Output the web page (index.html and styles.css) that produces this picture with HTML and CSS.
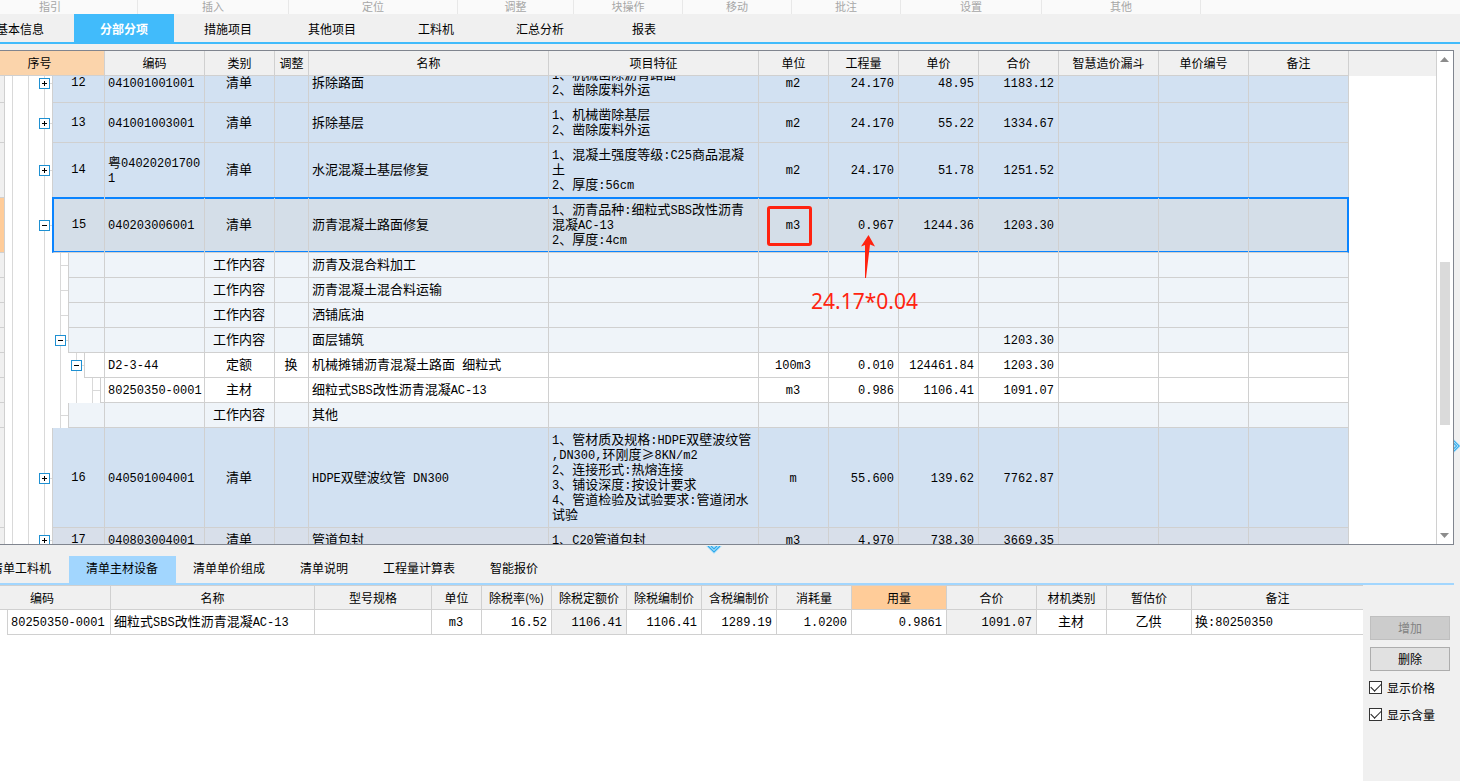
FILE: index.html
```html
<!DOCTYPE html>
<html lang="zh-CN">
<head>
<meta charset="utf-8">
<title>分部分项</title>
<link rel="stylesheet" href="styles.css">
</head>
<body>
<div class="ribbon">
  <span class="grp g1">指引</span><span class="grp g2">插入</span><span class="grp g3">定位</span><span class="grp g4">调整</span><span class="grp g5">块操作</span><span class="grp g5">移动</span><span class="grp g5">批注</span><span class="grp g6">设置</span><span class="grp g7">其他</span>
</div>
<nav class="tabs">
  <button>基本信息</button><button class="on">分部分项</button><button>措施项目</button><button>其他项目</button><button>工料机</button><button>汇总分析</button><button>报表</button>
</nav>

<main class="main">
  <section class="sheet">
    <div class="pane">
      <table class="grid head">
        <colgroup><col class="c105"><col class="c100"><col class="c70"><col class="c34"><col class="c240"><col class="c210"><col class="c70"><col class="c70"><col class="c80"><col class="c80"><col class="c100"><col class="c90"><col class="c100"><col></colgroup>
        <thead><tr><th class="seq">序号</th><th>编码</th><th>类别</th><th>调整</th><th>名称</th><th>项目特征</th><th>单位</th><th>工程量</th><th>单价</th><th>合价</th><th>智慧造价漏斗</th><th>单价编号</th><th>备注</th><th class="rest"></th></tr></thead>
      </table>
      <div class="view">
        <table class="grid rows">
          <colgroup><col class="c105"><col class="c100"><col class="c70"><col class="c34"><col class="c240"><col class="c210"><col class="c70"><col class="c70"><col class="c80"><col class="c80"><col class="c100"><col class="c90"><col class="c100"><col></colgroup>
          <tbody>
            <tr class="item"><td class="tree"><div class="node"><i class="strip"></i><i class="g"></i><i class="g"></i><span class="g t"><button class="tog" aria-label="展开"></button></span><b><span class="m">12</span></b></div></td><td><span class="m">041001001001</span></td><td class="c">清单</td><td></td><td>拆除路面</td><td><span class="m">1</span>、机械凿除沥青路面<br><span class="m">2</span>、凿除废料外运</td><td class="c"><span class="m">m2</span></td><td class="r"><span class="m">24.170</span></td><td class="r"><span class="m">48.95</span></td><td class="r"><span class="m">1183.12</span></td><td></td><td></td><td></td><td class="rest"></td></tr>
            <tr class="item"><td class="tree"><div class="node"><i class="strip"></i><i class="g"></i><i class="g"></i><span class="g t"><button class="tog" aria-label="展开"></button></span><b><span class="m">13</span></b></div></td><td><span class="m">041001003001</span></td><td class="c">清单</td><td></td><td>拆除基层</td><td><span class="m">1</span>、机械凿除基层<br><span class="m">2</span>、凿除废料外运</td><td class="c"><span class="m">m2</span></td><td class="r"><span class="m">24.170</span></td><td class="r"><span class="m">55.22</span></td><td class="r"><span class="m">1334.67</span></td><td></td><td></td><td></td><td class="rest"></td></tr>
            <tr class="item"><td class="tree"><div class="node"><i class="strip"></i><i class="g"></i><i class="g"></i><span class="g t"><button class="tog" aria-label="展开"></button></span><b><span class="m">14</span></b></div></td><td>粤<span class="m">04020201700</span><br><span class="m">1</span></td><td class="c">清单</td><td></td><td>水泥混凝土基层修复</td><td><span class="m">1</span>、混凝土强度等级<span class="m">:C25</span>商品混凝<br>土<br><span class="m">2</span>、厚度<span class="m">:56cm</span></td><td class="c"><span class="m">m2</span></td><td class="r"><span class="m">24.170</span></td><td class="r"><span class="m">51.78</span></td><td class="r"><span class="m">1251.52</span></td><td></td><td></td><td></td><td class="rest"></td></tr>
            <tr class="item sel"><td class="tree"><div class="node"><i class="strip"></i><i class="g"></i><i class="g"></i><span class="g t"><button class="tog open" aria-label="折叠"></button></span><b><span class="m">15</span></b></div></td><td><span class="m">040203006001</span></td><td class="c">清单</td><td></td><td>沥青混凝土路面修复</td><td><span class="m">1</span>、沥青品种<span class="m">:</span>细粒式<span class="m">SBS</span>改性沥青<br>混凝<span class="m">AC-13</span><br><span class="m">2</span>、厚度<span class="m">:4cm</span></td><td class="c note-cell"><span class="m">m3</span><span class="mark"></span></td><td class="r note-cell"><span class="m">0.967</span><svg class="arrow" width="16" height="43" viewBox="0 0 16 43"><path d="M8.500 0L15 11.500L10 9.500L6 43L5 43L5 10L1 11.500Z" fill="#ff2310"/></svg><span class="note">24.17*0.04</span></td><td class="r"><span class="m">1244.36</span></td><td class="r"><span class="m">1203.30</span></td><td></td><td></td><td class="last"></td><td class="rest"></td></tr>
            <tr class="work"><td class="tree"><div class="node"><i class="strip"></i><i class="g"></i><i class="g"></i><i class="g"></i><i class="g t"></i><b></b></div></td><td></td><td class="c">工作内容</td><td></td><td>沥青及混合料加工</td><td></td><td></td><td></td><td></td><td></td><td></td><td></td><td></td><td class="rest"></td></tr>
            <tr class="work"><td class="tree"><div class="node"><i class="strip"></i><i class="g"></i><i class="g"></i><i class="g"></i><i class="g t"></i><b></b></div></td><td></td><td class="c">工作内容</td><td></td><td>沥青混凝土混合料运输</td><td></td><td></td><td></td><td></td><td></td><td></td><td></td><td></td><td class="rest"></td></tr>
            <tr class="work"><td class="tree"><div class="node"><i class="strip"></i><i class="g"></i><i class="g"></i><i class="g"></i><i class="g t"></i><b></b></div></td><td></td><td class="c">工作内容</td><td></td><td>洒铺底油</td><td></td><td></td><td></td><td></td><td></td><td></td><td></td><td></td><td class="rest"></td></tr>
            <tr class="work"><td class="tree"><div class="node"><i class="strip"></i><i class="g"></i><i class="g"></i><i class="g"></i><span class="g t"><button class="tog open" aria-label="折叠"></button></span><b></b></div></td><td></td><td class="c">工作内容</td><td></td><td>面层铺筑</td><td></td><td></td><td></td><td></td><td class="r"><span class="m">1203.30</span></td><td></td><td></td><td></td><td class="rest"></td></tr>
            <tr><td class="tree"><div class="node"><i class="strip"></i><i class="g"></i><i class="g"></i><i class="g"></i><i class="g"></i><span class="g t"><button class="tog open" aria-label="折叠"></button></span><b></b></div></td><td><span class="m">D2-3-44</span></td><td class="c">定额</td><td class="c">换</td><td>机械摊铺沥青混凝土路面<span class="m"> </span>细粒式</td><td></td><td class="c"><span class="m">100m3</span></td><td class="r"><span class="m">0.010</span></td><td class="r"><span class="m">124461.84</span></td><td class="r"><span class="m">1203.30</span></td><td></td><td></td><td></td><td class="rest"></td></tr>
            <tr><td class="tree"><div class="node"><i class="strip"></i><i class="g"></i><i class="g"></i><i class="g"></i><i class="g"></i><i class="g"></i><i class="g t"></i><b></b></div></td><td><span class="m">80250350-0001</span></td><td class="c">主材</td><td></td><td>细粒式<span class="m">SBS</span>改性沥青混凝<span class="m">AC-13</span></td><td></td><td class="c"><span class="m">m3</span></td><td class="r"><span class="m">0.986</span></td><td class="r"><span class="m">1106.41</span></td><td class="r"><span class="m">1091.07</span></td><td></td><td></td><td></td><td class="rest"></td></tr>
            <tr class="work"><td class="tree"><div class="node"><i class="strip"></i><i class="g"></i><i class="g"></i><i class="g"></i><i class="g t"></i><b></b></div></td><td></td><td class="c">工作内容</td><td></td><td>其他</td><td></td><td></td><td></td><td></td><td></td><td></td><td></td><td></td><td class="rest"></td></tr>
            <tr class="item"><td class="tree"><div class="node"><i class="strip"></i><i class="g"></i><i class="g"></i><span class="g t"><button class="tog" aria-label="展开"></button></span><b><span class="m">16</span></b></div></td><td><span class="m">040501004001</span></td><td class="c">清单</td><td></td><td><span class="m">HDPE</span>双壁波纹管<span class="m"> DN300</span></td><td><span class="m">1</span>、管材质及规格<span class="m">:HDPE</span>双壁波纹管<br><span class="m">,DN300,</span>环刚度≥<span class="m">8KN/m2</span><br><span class="m">2</span>、连接形式<span class="m">:</span>热熔连接<br><span class="m">3</span>、铺设深度<span class="m">:</span>按设计要求<br><span class="m">4</span>、管道检验及试验要求<span class="m">:</span>管道闭水<br>试验</td><td class="c"><span class="m">m</span></td><td class="r"><span class="m">55.600</span></td><td class="r"><span class="m">139.62</span></td><td class="r"><span class="m">7762.87</span></td><td></td><td></td><td></td><td class="rest"></td></tr>
            <tr class="item alt"><td class="tree"><div class="node"><i class="strip"></i><i class="g"></i><i class="g"></i><span class="g t"><button class="tog" aria-label="展开"></button></span><b><span class="m">17</span></b></div></td><td><span class="m">040803004001</span></td><td class="c">清单</td><td></td><td>管道包封</td><td><span class="m">1</span>、<span class="m">C20</span>管道包封</td><td class="c"><span class="m">m3</span></td><td class="r"><span class="m">4.970</span></td><td class="r"><span class="m">738.30</span></td><td class="r"><span class="m">3669.35</span></td><td></td><td></td><td></td><td class="rest"></td></tr>
          </tbody>
        </table>
      </div>
    </div>
    <div class="bar">
      <svg width="9" height="5" viewBox="0 0 9 5"><path d="M4.500 0L9 5H0Z" fill="#8c8c8c"/></svg>
      <span class="thumb"></span>
      <svg width="9" height="5" viewBox="0 0 9 5"><path d="M4.500 5L9 0H0Z" fill="#8c8c8c"/></svg>
    </div>
  </section>
  <div class="side-split"><svg width="7" height="16" viewBox="0 0 7 16"><path d="M0 0L8 8L0 16Z" fill="#b5e2fa"/><path d="M0 2L6 8L0 14M0 5L3 8L0 11" fill="none" stroke="#2fa9ea" stroke-width="1.200"/></svg></div>
</main>

<section class="detail">
  <div class="split"><svg width="16" height="8" viewBox="0 0 16 8"><path d="M0 0H16L8 8Z" fill="#b5e2fa"/><path d="M2 0L8 6L14 0M5 0L8 3L11 0" fill="none" stroke="#2fa9ea" stroke-width="1.200"/></svg></div>
  <nav class="subtabs"><button>清单工料机</button><button class="on">清单主材设备</button><button>清单单价组成</button><button>清单说明</button><button>工程量计算表</button><button>智能报价</button></nav>
  <div class="lower">
    <div class="list">
      <table class="grid mat">
        <colgroup><col class="c8"><col class="c103"><col class="c204"><col class="c117"><col class="c50"><col class="c70"><col class="c75"><col class="c75"><col class="c75"><col class="c75"><col class="c95"><col class="c90"><col class="c70"><col class="c85"><col></colgroup>
        <thead><tr><th colspan="2" class="code">编码</th><th>名称</th><th>型号规格</th><th>单位</th><th>除税率(%)</th><th>除税定额价</th><th>除税编制价</th><th>含税编制价</th><th>消耗量</th><th class="hot">用量</th><th>合价</th><th>材机类别</th><th>暂估价</th><th class="end">备注</th></tr></thead>
        <tbody><tr><td class="gut"></td><td><span class="m">80250350-0001</span></td><td>细粒式<span class="m">SBS</span>改性沥青混凝<span class="m">AC-13</span></td><td></td><td class="c"><span class="m">m3</span></td><td class="r"><span class="m">16.52</span></td><td class="r lock"><span class="m">1106.41</span></td><td class="r"><span class="m">1106.41</span></td><td class="r"><span class="m">1289.19</span></td><td class="r"><span class="m">1.0200</span></td><td class="r"><span class="m">0.9861</span></td><td class="r lock"><span class="m">1091.07</span></td><td class="c">主材</td><td class="c">乙供</td><td class="end">换<span class="m">:80250350</span></td></tr></tbody>
      </table>
    </div>
    <aside class="tools">
      <button class="btn" disabled>增加</button>
      <button class="btn">删除</button>
      <label><input type="checkbox" checked>显示价格</label>
      <label><input type="checkbox" checked>显示含量</label>
    </aside>
  </div>
</section>
</body>
</html>
```
FILE: styles.css
```css
* { box-sizing: border-box; }
body {
  margin: 0;
  height: 100vh;
  overflow: hidden;
  display: grid;
  grid-template-columns: 100%;
  grid-template-rows: auto auto 1fr 236px;
  background: #f0f0f0;
  color: #000;
  font: 12px/16px "Noto Sans CJK SC", sans-serif;
}
button { font: inherit; color: inherit; border: 0; background: none; padding: 0; }

.ribbon { display: flex; height: 14px; background: #fafafa; color: #a6a6a6; font-size: 11px; line-height: 12px; }
.grp { flex: none; text-align: center; border-right: 1px solid #e8e8e8; }
.g1 { width: 175px; margin-left: -37px; }
.g2 { width: 151px; }
.g3 { width: 169px; }
.g4 { width: 116px; }
.g5 { width: 109px; }
.g6 { width: 141px; }
.g7 { width: 159px; }

.tabs { display: flex; gap: 4px; height: 30px; margin-left: -30px; border-bottom: 2px solid #41bbfb; }
.tabs button { width: 100px; padding-top: 2px; }
.tabs .on { background: #41bbfb; color: #fff; font-weight: bold; }

.main { display: flex; min-height: 0; padding-top: 6px; }
.sheet { flex: 1; min-width: 0; display: flex; border: 1px solid #80858f; border-left: 0; background: #fff; }
.pane { flex: 1; min-width: 0; display: flex; flex-direction: column; }
.view { flex: 1; min-height: 0; overflow: hidden; }
.rows { margin-top: -13px; }

.grid { width: 100%; table-layout: fixed; border-collapse: separate; border-spacing: 0; }
.grid th { height: 25px; padding: 0; background: #f0f0f0; font-weight: normal; border-right: 1px solid #d0d0d0; border-bottom: 1px solid #d0d0d0; white-space: nowrap; }
.grid .seq { background: #fbd4ab; padding-right: 25px; }
.grid td { height: 25px; padding: 3px 4px 6px 3px; font-size: 13px; line-height: 15px; border-right: 1px solid #d0d0d0; border-bottom: 1px solid #d0d0d0; white-space: pre; overflow: hidden; }
.grid .rest { border: 0; }
.grid td.rest { background: #fff; }
.grid .c { text-align: center; }
.grid .r { text-align: right; }
.m { font-family: "Liberation Mono", monospace; font-size: 12px; line-height: 0; }

.item td, .item .node b { background: #d2e1f2; }
.work td, .work .node b { background: #eff4f9; }
.alt td, .alt .node b { background: #d8dfea; }
.sel td, .sel .node b { background: #d4dee8; }

.grid .tree { padding: 0; border-bottom: 0; background: #fff; }
.node { display: flex; height: 100%; }
.node b { flex: 1; margin-left: -1px; display: flex; align-items: center; justify-content: center; border-left: 1px solid #d0d0d0; border-bottom: 1px solid #d0d0d0; font-weight: normal; }
.strip { width: 5px; background: #f0f0f0; border-right: 1px solid #d0d0d0; border-bottom: 1px solid #d0d0d0; }
.sel .strip { background: #fc9; }
.g { width: 16px; display: flex; align-items: center; padding-left: 2px; background: linear-gradient(#d9d9d9, #d9d9d9) 7px 0 / 1px 100% no-repeat; }
.t { background: linear-gradient(#d9d9d9, #d9d9d9) 7px 0 / 1px 100% no-repeat, linear-gradient(#d9d9d9, #d9d9d9) 8px 50% / 8px 1px no-repeat; }
.tog {
  width: 11px;
  height: 11px;
  border: 1px solid #1e90d2;
  background: linear-gradient(#000, #000) center / 5px 1px no-repeat, linear-gradient(#000, #000) center / 1px 5px no-repeat, #fff;
}
.open { background: linear-gradient(#000, #000) center / 5px 1px no-repeat, #fff; }

.sel td:not(.tree):not(.rest) { box-shadow: 0 -1px #0a84ff, inset 0 1px #0a84ff, inset 0 -1px #0a84ff; }
.grid .sel .tree { overflow: visible; }
.sel .node b { border-left: 2px solid #0a84ff; box-shadow: 0 -1px #0a84ff, inset 0 1px #0a84ff, inset 0 -1px #0a84ff; }
.grid .sel .last { border-right: 2px solid #0a84ff; }
.grid .note-cell { position: relative; overflow: visible; }
.mark { position: absolute; left: 8px; top: 8px; width: 45px; height: 40px; border: 3px solid #ff2310; border-radius: 3px; }
.arrow { position: absolute; left: 31px; top: 37px; z-index: 1; }
.note { position: absolute; right: -20px; top: 90px; z-index: 1; color: #ff2310; font: 21px/26px "Noto Sans", sans-serif; }

.bar { width: 17px; padding: 6px 3px; display: flex; flex-direction: column; align-items: flex-start; border-left: 1px solid #d0d0d0; }
.thumb { width: 10px; height: 163px; margin-top: 200px; margin-bottom: auto; background: #dadada; }
.side-split { flex: none; width: 6px; display: flex; align-items: flex-start; padding-top: 388px; overflow: hidden; }

.detail { display: flex; flex-direction: column; min-height: 0; }
.split { display: flex; height: 11px; padding: 1px 0 0 706px; }
.subtabs { display: flex; height: 29px; margin-left: -26px; margin-right: 6px; border-bottom: 2px solid #a2d6fe; }
.subtabs button { padding: 0 18px 3px 17px; }
.subtabs .on { background: #a2d6fe; }
.lower { flex: 1; display: flex; min-height: 0; }
.list { flex: 1; min-width: 0; background: #fff; border-top: 1px solid #d0d0d0; }
.grid .code { padding-right: 26px; }
.mat th { height: 24px; }
.grid .gut { padding: 0; border-bottom: 0; }
.grid .hot { background: #fc9; }
.grid .lock { background: #f0f0f0; }
.grid .end { border-right: 0; }
.tools { width: 97px; padding: 31px 10px 0 7px; display: flex; flex-direction: column; }
.btn { height: 24px; margin-bottom: 7px; padding-bottom: 1px; background: #e1e1e1; border: 1px solid #adadad; }
.btn + label { margin-top: -4px; }
.btn:disabled { background: #ccc; border-color: #bfbfbf; color: #838383; }
.tools label { display: flex; align-items: center; gap: 5px; height: 27px; margin-left: -1px; white-space: nowrap; }
.tools input {
  appearance: none;
  flex: none;
  width: 13px;
  height: 13px;
  margin: 0;
  border: 1px solid #333;
  background: #fff;
  display: grid;
  place-items: center;
}
.tools input:checked::before { content: ""; width: 9px; height: 5px; margin-top: -3px; border-left: 1px solid #222; border-bottom: 1px solid #222; transform: rotate(-45deg); }

.c8 { width: 8px; }
.c34 { width: 34px; }
.c50 { width: 50px; }
.c70 { width: 70px; }
.c75 { width: 75px; }
.c80 { width: 80px; }
.c85 { width: 85px; }
.c90 { width: 90px; }
.c95 { width: 95px; }
.c100 { width: 100px; }
.c103 { width: 103px; }
.c105 { width: 105px; }
.c117 { width: 117px; }
.c204 { width: 204px; }
.c210 { width: 210px; }
.c240 { width: 240px; }
```
